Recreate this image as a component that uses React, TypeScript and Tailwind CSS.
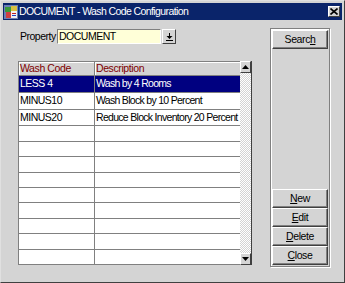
import React from "react";

const rows = [
  { code: "LESS 4", desc: "Wash by 4 Rooms", sel: true },
  { code: "MINUS10", desc: "Wash Block by 10 Percent" },
  { code: "MINUS20", desc: "Reduce Block Inventory 20 Percent" },
  { code: "", desc: "" },
  { code: "", desc: "" },
  { code: "", desc: "" },
  { code: "", desc: "" },
  { code: "", desc: "" },
  { code: "", desc: "" },
  { code: "", desc: "" },
  { code: "", desc: "" },
  { code: "", desc: "" },
];

function Btn({ children, cls = "" }: { children: React.ReactNode; cls?: string }) {
  return (
    <div
      className={
        "flex items-center justify-center bg-[#d4d4d4] text-black text-[10.5px] tracking-[-0.4px] border border-t-white border-l-white border-r-[#404040] border-b-[#404040] shadow-[inset_-1px_-1px_0_#808080] " +
        cls
      }
    >
      {children}
    </div>
  );
}

export default function App() {
  return (
    <div
      className="w-[345px] h-[283px] bg-[#d4d4d4] border border-t-[#e0e0e0] border-l-[#e0e0e0] border-r-[#404040] border-b-[#404040] p-[2px] flex flex-col overflow-hidden"
      style={{ fontFamily: '"Liberation Sans", Arial, sans-serif' }}
    >
      {/* Title bar */}
      <div className="h-[17px] bg-[#0a246a] flex items-center pl-[1px] pr-[2px] shrink-0">
        <svg width="14" height="14" viewBox="0 0 14 14" className="shrink-0">
          <rect x="0" y="0" width="14" height="14" fill="#6b7fb5" />
          <rect x="1" y="2" width="6" height="5" fill="#3a9a3a" />
          <rect x="7" y="1" width="6" height="5" fill="#d8c040" />
          <rect x="2" y="7" width="5" height="6" fill="#d04040" />
          <rect x="7" y="6" width="6" height="7" fill="#f0f0f0" />
          <rect x="8" y="8" width="4" height="1" fill="#c02020" />
          <rect x="8" y="10" width="4" height="1" fill="#2040c0" />
        </svg>
        <span className="text-white text-[10.5px] tracking-[-0.6px] ml-[1px] leading-none whitespace-nowrap">
          DOCUMENT - Wash Code Configuration
        </span>
        <div className="ml-auto w-[12px] h-[11px] bg-[#d4d4d4] border border-t-white border-l-white border-r-[#404040] border-b-[#404040] flex items-center justify-center">
          <svg width="8" height="7" viewBox="0 0 8 7">
            <path d="M0.5 0.5 L7.5 6.5 M7.5 0.5 L0.5 6.5" stroke="#000" strokeWidth="1.6" />
          </svg>
        </div>
      </div>

      {/* Body */}
      <div className="flex-1 flex pl-[15px]">
        {/* Left column */}
        <div className="w-[234px] flex flex-col">
          <div className="flex items-center mt-[9px] h-[15px]">
            <span className="w-[37px] shrink-0 text-[10.5px] tracking-[-0.5px] text-black ml-[2px] leading-none">Property</span>
            <div className="w-[104px] h-[15px] bg-[#ffffd8] border border-t-[#808080] border-l-[#808080] border-r-white border-b-white text-[10.5px] tracking-[-0.5px] leading-[13px] pl-[1px] text-black">
              DOCUMENT
            </div>
            <div className="w-[14px] h-[15px] ml-[1px] bg-[#d4d4d4] border border-t-white border-l-white border-r-[#404040] border-b-[#404040] flex items-center justify-center">
              <svg width="7" height="8" viewBox="0 0 7 8">
                <rect x="3" y="0" width="1" height="3" fill="#000" />
                <path d="M0.5 3 L6.5 3 L3.5 6 Z" fill="#000" />
                <rect x="0" y="7" width="7" height="1" fill="#000" />
              </svg>
            </div>
          </div>

          {/* Table */}
          <div className="mt-[17px] flex w-[234px] h-[204px]">
            <div className="w-[222px] flex flex-col border-t border-l border-[#808080] bg-white">
              <div className="h-[14px] flex bg-[#d4d4d4] border-b border-[#808080] shrink-0">
                <div className="w-[76px] border-r border-[#808080] text-[10.5px] tracking-[-0.4px] text-[#800000] pl-[1px] leading-[13px] shadow-[inset_1px_1px_0_#fff]">
                  Wash Code
                </div>
                <div className="flex-1 text-[10.5px] tracking-[-0.4px] text-[#800000] pl-[1px] leading-[13px] shadow-[inset_1px_1px_0_#fff]">
                  Description
                </div>
              </div>
              <div className="flex-1 flex flex-col">
                {rows.map((r, i) => (
                  <div
                    key={i}
                    className={
                      "flex-1 flex border-b border-[#808080] " +
                      (r.sel ? "bg-[#000080] text-white" : "bg-white text-black")
                    }
                  >
                    <div className="w-[76px] border-r border-[#808080] text-[10.5px] tracking-[-0.5px] pl-[1px] flex items-center whitespace-nowrap overflow-hidden">
                      {r.code}
                    </div>
                    <div className="flex-1 text-[10.5px] tracking-[-0.7px] pl-[1px] flex items-center whitespace-nowrap overflow-hidden">
                      {r.desc}
                    </div>
                  </div>
                ))}
              </div>
            </div>
            {/* Scrollbar */}
            <div className="w-[12px] flex flex-col bg-[#ececec] border-r border-[#404040]">
              <div className="h-[12px] bg-[#d4d4d4] border border-t-white border-l-white border-r-[#404040] border-b-[#404040] flex items-center justify-center shrink-0">
                <svg width="7" height="4" viewBox="0 0 7 4">
                  <path d="M0 4 L3.5 0 L7 4 Z" fill="#000" />
                </svg>
              </div>
              <div className="flex-1 bg-[repeating-conic-gradient(#ffffff_0_25%,#d4d4d4_0_50%)] bg-[length:2px_2px]" />
              <div className="h-[12px] bg-[#d4d4d4] border border-t-white border-l-white border-r-[#404040] border-b-[#404040] flex items-center justify-center shrink-0">
                <svg width="7" height="4" viewBox="0 0 7 4">
                  <path d="M0 0 L7 0 L3.5 4 Z" fill="#000" />
                </svg>
              </div>
            </div>
          </div>
        </div>

        {/* Right panel */}
        <div className="ml-[18px] mt-[8px] w-[60px] h-[239px] border border-[#808080] shadow-[inset_1px_1px_0_#fff,1px_1px_0_#fff] flex flex-col px-[1px] pt-[1px] pb-[1px]">
          <Btn cls="h-[19px]">
            Searc<span className="underline">h</span>
          </Btn>
          <div className="flex-1" />
          <Btn cls="h-[19px]">
            <span className="underline">N</span>ew
          </Btn>
          <Btn cls="h-[19px]">
            <span className="underline">E</span>dit
          </Btn>
          <Btn cls="h-[19px]">
            <span className="underline">D</span>elete
          </Btn>
          <Btn cls="h-[19px]">
            <span className="underline">C</span>lose
          </Btn>
        </div>
      </div>
    </div>
  );
}
